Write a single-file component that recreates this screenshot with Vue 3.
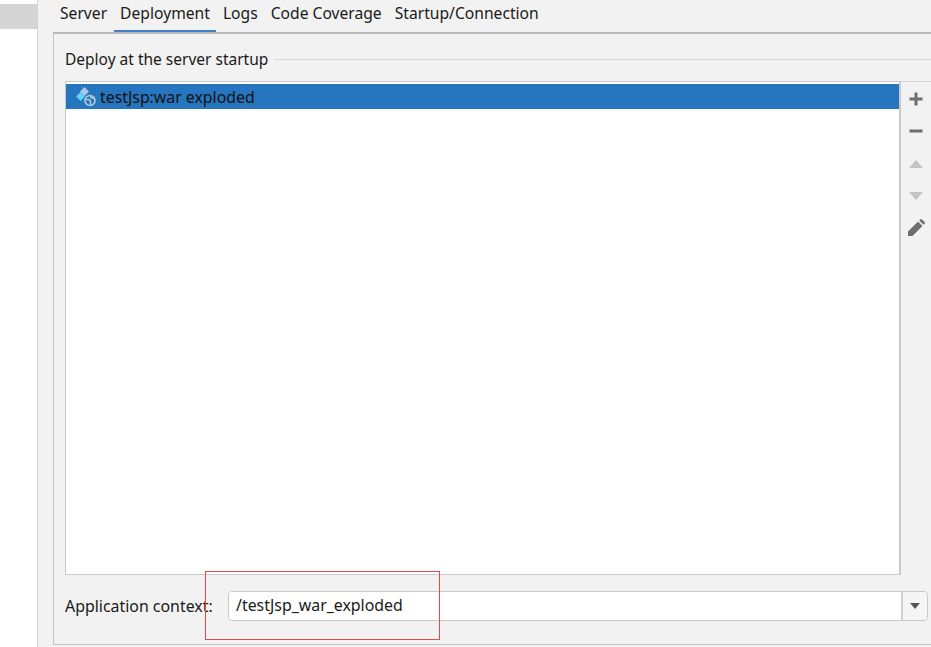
<template>
  <div class="page">
    <!-- left tree edge -->
    <aside class="side">
      <div class="side-sel"></div>
    </aside>

    <main class="main">
      <nav class="tabs">
        <a v-for="tab in tabs" :key="tab" class="tab" :class="{ active: tab === activeTab }">{{ tab }}</a>
      </nav>

      <section class="panel">
        <div class="legend">
          <span>Deploy at the server startup</span>
          <i class="legend-line"></i>
        </div>

        <div class="deploy">
          <div class="list">
            <div class="row">
              <svg class="artifact" width="22" height="20" viewBox="0 0 22 20">
                <path d="M8.500 0L13 4.500 8.500 9 4 4.500z" fill="#a9c6e2" />
                <path d="M4.500 5L9 9.500 4.500 14 0 9.500z" fill="#5ed2f7" />
                <circle cx="14" cy="13.500" r="6" fill="#2675bf" />
                <circle cx="14" cy="13.500" r="5" fill="none" stroke="#b4c9dc" stroke-width="1.600" />
                <path d="M10 12c2 1.500 3 0 4 1.500s0 3 1 4.500M14.500 9c-.5 1.500 1 2 3.500 2.500" fill="none" stroke="#b4c9dc" stroke-width="1.400" />
              </svg>
              <span>testJsp:war exploded</span>
            </div>
          </div>

          <div class="tools">
            <svg width="16" height="16" viewBox="0 0 16 16"><path d="M6.500 1.500h3v5h5v3h-5v5h-3v-5h-5v-3h5z" fill="#6e6e6e" /></svg>
            <svg width="16" height="16" viewBox="0 0 16 16"><path d="M1.500 6.500h13v3h-13z" fill="#6e6e6e" /></svg>
            <svg width="16" height="16" viewBox="0 0 16 16"><path d="M8 5l7 8H1z" fill="#c4c4c4" /></svg>
            <svg width="16" height="16" viewBox="0 0 16 16"><path d="M1 5h14l-7 8z" fill="#c4c4c4" /></svg>
            <svg width="18" height="18" viewBox="0 0 18 18"><path d="M1 17v-4.500L11 2.500 15.500 7 5.500 17zM12.200 1.500l1-1a1.200 1.200 0 0 1 1.700 0l2.600 2.600a1.200 1.200 0 0 1 0 1.700l-1 1z" fill="#6e6e6e" /></svg>
          </div>
        </div>

        <div class="context">
          <label>Application context:</label>
          <div class="combo">
            <input class="combo-input" type="text" value="/testJsp_war_exploded" />
            <div class="combo-btn"><i class="caret"></i></div>
          </div>
        </div>
      </section>
    </main>

    <!-- annotation box drawn over the screenshot -->
    <div class="mark"></div>
  </div>
</template>

<script setup>
const tabs = ["Server", "Deployment", "Logs", "Code Coverage", "Startup/Connection"];
const activeTab = "Deployment";
</script>

<style>
html,
body {
  margin: 0;
  background: #f2f2f2;
  overflow: hidden;
}
</style>

<style scoped>
.page {
  position: relative;
  display: flex;
  width: 931px;
  height: 647px;
  overflow: hidden;
  font-family: "Noto Sans", "Open Sans", sans-serif;
  font-size: 15.9px;
  color: #1a1a1a;
  background: #f2f2f2;
}

.side {
  flex: none;
  width: 38px;
  padding-top: 4px;
  box-sizing: border-box;
  background: #fff;
  border-right: 1px solid #d4d4d4;
}

.side-sel {
  height: 25px;
  background: #d5d5d5;
}

.main {
  flex: 1;
  min-width: 0;
  padding-left: 15px;
  display: flex;
  flex-direction: column;
}

.tabs {
  display: flex;
  height: 32px;
  flex: none;
  padding-left: 0.5px;
  font-size: 15.65px;
}

.tab {
  height: 26px;
  line-height: 26px;
  padding: 0 6.5px;
  white-space: nowrap;
}

.tab.active {
  height: 33px;
  box-sizing: border-box;
  border-bottom: 3px solid #4083c9;
}

.panel {
  flex: none;
  height: 613px;
  box-sizing: border-box;
  border-top: 2px solid #b9b9b9;
  border-left: 1px solid #c4c4c4;
  border-bottom: 1px solid #c4c4c4;
  padding: 15px 0 0 11px;
  display: flex;
  flex-direction: column;
}

.legend {
  display: flex;
  align-items: center;
  gap: 6px;
  height: 20px;
  flex: none;
  font-size: 15.5px;
}

.legend-line {
  flex: 1;
  border-top: 1px solid #d6d6d6;
}

.deploy {
  display: flex;
  flex: none;
  height: 494px;
  margin-top: 12px;
}

.list {
  flex: none;
  width: 836px;
  height: 494px;
  box-sizing: border-box;
  background: #fff;
  border: 1px solid #c9c9c9;
  border-right-width: 2px;
  padding: 2px 0 0 0;
}

.row {
  display: flex;
  align-items: center;
  height: 25px;
  padding-left: 10px;
  gap: 2px;
  background: #2675bf;
  color: #111;
  font-size: 15.85px;
}

.artifact {
  flex: none;
}

.tools {
  flex: 1;
  display: flex;
  flex-direction: column;
  align-items: center;
  gap: 16px;
  border-top: 1px solid #d6d6d6;
  padding-top: 9px;
  box-sizing: border-box;
}

.context {
  display: flex;
  align-items: center;
  flex: none;
  margin-top: 16px;
  height: 30px;
}

.context label {
  flex: none;
  width: 163px;
}

.combo {
  flex: none;
  display: flex;
  width: 700px;
  height: 30px;
  box-sizing: border-box;
  background: #fff;
  border: 1px solid #c9c9c9;
  border-radius: 4px;
  overflow: hidden;
}

.combo-input {
  flex: 1;
  min-width: 0;
  border: none;
  outline: none;
  padding: 0 0 2px 7px;
  font: inherit;
  color: #1a1a1a;
  background: #fff;
}

.combo-btn {
  flex: none;
  width: 26px;
  display: flex;
  align-items: center;
  justify-content: center;
  background: #f5f5f5;
  border-left: 2px solid #d0d0d0;
  box-sizing: border-box;
}

.caret {
  width: 0;
  height: 0;
  border-left: 5px solid transparent;
  border-right: 5px solid transparent;
  border-top: 6px solid #555;
}

.mark {
  position: absolute;
  left: 205px;
  top: 571px;
  width: 235px;
  height: 69px;
  box-sizing: border-box;
  border: 1px solid #e5474b;
}
</style>
